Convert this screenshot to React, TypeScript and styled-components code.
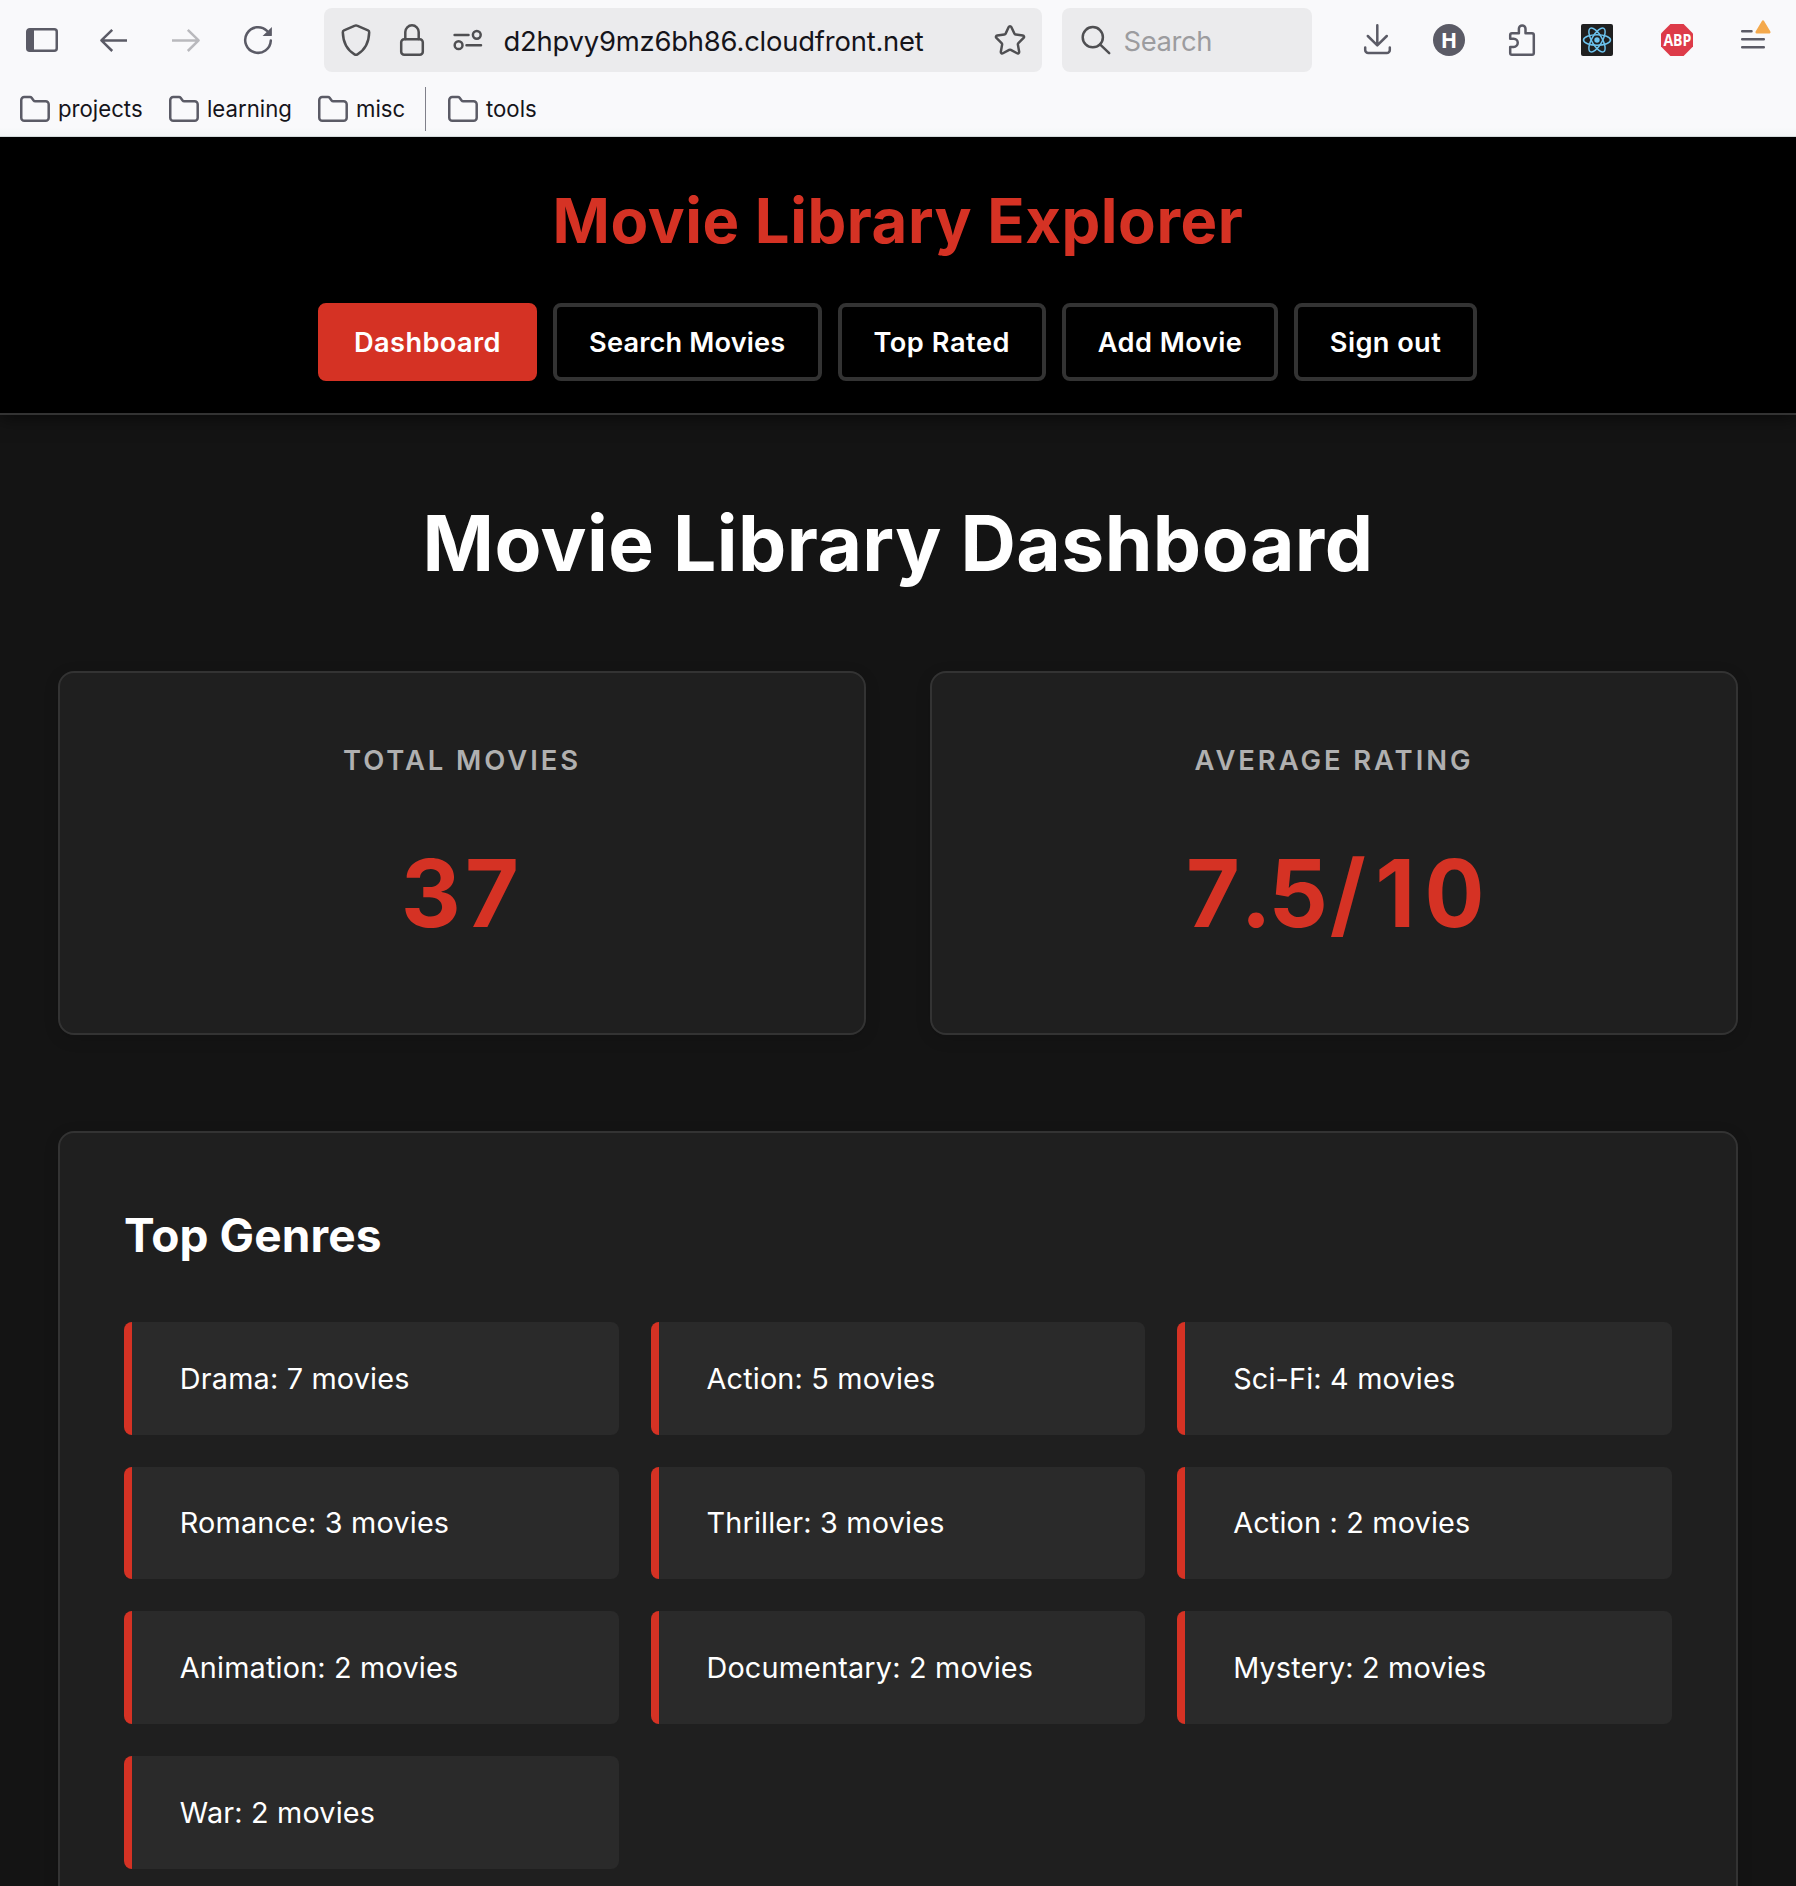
import React from 'react';
import styled, { createGlobalStyle } from 'styled-components';

const red = '#d53224';
const line = '#333333';
const chrome = '#5b5b66';
const field = '#4f4f52';

const GlobalStyle = createGlobalStyle`
  * { box-sizing: border-box; }
  html, body { margin: 0; padding: 0; background: #141414; }
  body {
    height: 1886px;
    overflow: hidden;
    font-family: Inter, "Liberation Sans", sans-serif;
    color: #ffffff;
  }
  h1, h2, h3, p, ul { margin: 0; padding: 0; }
`;

const Screen = styled.div`
  width: 1796px;
  height: 1886px;
  overflow: hidden;
  display: flex;
  flex-direction: column;
  background: #141414;
`;

/* Browser chrome */

const BrowserChrome = styled.div`
  position: relative;
  z-index: 1;
  flex: none;
  height: 137px;
  background: linear-gradient(#f9f9fb 0, #f9f9fb 127px, #f3f5f6 136px);
  border-bottom: 1px solid #d3dadb;
  color: #15141a;
`;

const Toolbar = styled.div`
  height: 80px;
  display: flex;
  align-items: center;
  padding-left: 26px;
`;

const NavButtons = styled.div`
  display: flex;
  gap: 40px;
  margin-right: 50px;
`;

const Glyph = styled.svg<{ $color?: string; $ml?: number; $stroke?: number }>`
  flex: none;
  display: block;
  width: 32px;
  height: 32px;
  overflow: visible;
  margin-left: ${(p) => p.$ml ?? 0}px;
  color: ${(p) => p.$color ?? chrome};
  fill: none;
  stroke: currentColor;
  stroke-width: ${(p) => p.$stroke ?? 2.5};
  stroke-linecap: round;
  stroke-linejoin: round;
`;

const Field = styled.div<{ $w: number; $pad: number }>`
  flex: none;
  width: ${(p) => p.$w}px;
  height: 64px;
  padding: 0 ${(p) => p.$pad}px;
  display: flex;
  align-items: center;
  border-radius: 8px;
  background: #ebebed;
`;

const SiteIcons = styled.div`
  display: flex;
  gap: 24px;
`;

const Address = styled.span`
  flex: 1;
  margin-left: 19.5px;
  font-size: 27.4px;
  line-height: 64px;
  letter-spacing: -0.2px;
  white-space: nowrap;
  padding-top: 2px;
`;

const SearchText = styled.span`
  margin-left: 11.5px;
  font-size: 27.4px;
  line-height: 64px;
  letter-spacing: -0.4px;
  color: #9c9c9f;
  padding-top: 2px;
`;

const SearchGap = styled.div`
  margin-left: 20px;
`;

const BadgeText = styled.text`
  font-family: "Open Sans", "Liberation Sans", sans-serif;
  font-weight: 700;
  fill: #ffffff;
  stroke: none;
`;

const Bookmarks = styled.div`
  height: 56px;
  padding-left: 20px;
  display: grid;
  grid-template-columns: 149px 149px 107px 23px auto;
  align-items: center;
`;

const Bookmark = styled.div`
  display: flex;
  align-items: center;
  font-size: 22.2px;
  line-height: 56px;
  letter-spacing: 0;
`;

const BookmarkName = styled.span`
  padding-top: 1px;
`;

const FolderSvg = styled.svg`
  flex: none;
  width: 30px;
  height: 28px;
  margin-right: 8px;
  fill: none;
  stroke: ${chrome};
  stroke-width: 2.5;
  stroke-linejoin: round;
`;

const Separator = styled.div`
  width: 1px;
  height: 44px;
  background: #80808a;
`;

/* Page */

const SiteHeader = styled.header`
  position: relative;
  flex: none;
  height: 278px;
  padding-top: 48px;
  background: #000000;
  border-bottom: 2px solid ${line};
  box-shadow: 0 4px 16px rgba(0, 0, 0, 0.5);
  text-align: center;
`;

const SiteTitle = styled.h1`
  font-size: 61.6px;
  line-height: 72px;
  font-weight: 700;
  letter-spacing: 0.55px;
  color: ${red};
  margin-bottom: 46px;
`;

const Nav = styled.nav`
  display: flex;
  justify-content: center;
  gap: 16px;
  padding-right: 1px;
`;

const NavButton = styled.button<{ $w: number; $active?: boolean; $ls: number }>`
  width: ${(p) => p.$w}px;
  height: 78px;
  padding: 0;
  border: 4px solid ${(p) => (p.$active ? red : line)};
  border-radius: 8px;
  background: ${(p) => (p.$active ? red : '#000000')};
  color: #ffffff;
  font-family: inherit;
  font-size: 27.2px;
  font-weight: 600;
  letter-spacing: ${(p) => p.$ls}px;
  white-space: nowrap;
`;

const Main = styled.main`
  padding: 64px 58px 0;
`;

const PageTitle = styled.h2`
  text-align: center;
  font-size: 76.7px;
  line-height: 128px;
  font-weight: 700;
  letter-spacing: 0.45px;
  margin-bottom: 64px;
`;

const Stats = styled.section`
  display: grid;
  grid-template-columns: 1fr 1fr;
  gap: 64px;
  margin-bottom: 96px;
`;

const Panel = styled.div`
  background: #1f1f1f;
  border: 2px solid ${line};
  border-radius: 16px;
  padding: 64px;
  box-shadow: 0 4px 16px rgba(0, 0, 0, 0.12);
`;

const StatPanel = styled(Panel)`
  height: 364px;
  text-align: center;
`;

const StatLabel = styled.h3`
  font-size: 27.4px;
  line-height: 46px;
  font-weight: 600;
  letter-spacing: 2.95px;
  color: #b0b0b0;
  margin-bottom: 32px;
`;

const StatValue = styled.p`
  font-size: 92.8px;
  line-height: 156px;
  font-weight: 750;
  font-kerning: none;
  font-variant-numeric: tabular-nums;
  letter-spacing: 0.6px;
  color: ${red};
`;

/* The tabular "1" has a foot serif, so the plain one is padded to a digit's width. */
const PlainOne = styled.span`
  font-variant-numeric: normal;
  margin: 0 8.5px 0 9px;
`;

const GenrePanel = styled(Panel)`
  height: 900px;
`;

const GenreTitle = styled.h3`
  font-size: 46px;
  line-height: 77px;
  font-weight: 700;
  letter-spacing: 0.1px;
  margin-bottom: 48px;
`;

const GenreList = styled.ul`
  list-style: none;
  display: grid;
  grid-template-columns: repeat(3, 1fr);
  grid-auto-rows: 112.67px;
  gap: 32px;
`;

const GenreItem = styled.li`
  display: flex;
  align-items: center;
  padding-left: 47.8px;
  border-left: 8px solid ${red};
  border-radius: 8px;
  background: #2a2a2a;
  font-size: 28.8px;
  letter-spacing: 0.18px;
  white-space: nowrap;
`;

const Folder = () => (
  <FolderSvg viewBox="0 0 30 28">
    <path d="M1.25 5 a3 3 0 0 1 3-3 H10 a2 2 0 0 1 1.6.8 L13.6 5.4 a2 2 0 0 0 1.6.8 H25.7 a3 3 0 0 1 3 3 V22.8 a3 3 0 0 1-3 3 H4.25 a3 3 0 0 1-3-3 Z" />
  </FolderSvg>
);

const navItems = [
  { label: 'Dashboard', w: 219, ls: 0.4, active: true },
  { label: 'Search Movies', w: 268.5, ls: 0.15 },
  { label: 'Top Rated', w: 208.5, ls: 0.55 },
  { label: 'Add Movie', w: 216, ls: 0.45 },
  { label: 'Sign out', w: 183, ls: 0.4 },
];

const genres = [
  'Drama: 7 movies',
  'Action: 5 movies',
  'Sci-Fi: 4 movies',
  'Romance: 3 movies',
  'Thriller: 3 movies',
  'Action : 2 movies',
  'Animation: 2 movies',
  'Documentary: 2 movies',
  'Mystery: 2 movies',
  'War: 2 movies',
];

const Browser = () => (
  <BrowserChrome>
    <Toolbar>
      <NavButtons>
        <Glyph viewBox="0 0 32 32">
          <rect x="1.25" y="5.25" width="29.5" height="21.5" rx="2.5" />
          <path d="M2 6h6v20H2z" fill="currentColor" stroke="none" />
        </Glyph>
        <Glyph viewBox="0 0 32 32">
          <path d="M3.4 16.4H29M14.2 5.8 3.4 16.4 14.2 27" strokeLinecap="butt" />
        </Glyph>
        <Glyph viewBox="0 0 32 32" $color="#b9b9bd">
          <path d="M28.6 16.4H2M17.8 5.8 28.6 16.4 17.8 27" strokeLinecap="butt" />
        </Glyph>
        <Glyph viewBox="0 0 32 32">
          <path d="M28.8 16.6A12.8 12.8 0 1 1 25 6.9" />
          <path d="M29.9 3v8.2a.9.9 0 0 1-.9.9h-8.4z" fill="currentColor" stroke="none" />
        </Glyph>
      </NavButtons>
      <Field $w={718} $pad={16}>
        <SiteIcons>
          <Glyph viewBox="0 0 32 32" $color={field}>
            <path d="M15 1.7a2.4 2.4 0 0 1 2 0L28 6.3a2 2 0 0 1 1.2 2c-.3 10-3.8 17.4-11.7 22a3 3 0 0 1-3 0C6.6 25.7 3.1 18.3 2.8 8.3a2 2 0 0 1 1.2-2z" />
          </Glyph>
          <Glyph viewBox="0 0 32 32" $color={field}>
            <rect x="5.2" y="15.2" width="21.6" height="15.6" rx="3" />
            <path d="M9.3 15V8a6.7 6.7 0 0 1 13.4 0v7" />
          </Glyph>
          <Glyph viewBox="0 0 32 32" $color={field}>
            <path d="M2.6 11H16.5M14.5 21.2H29" />
            <circle cx="24.8" cy="10.8" r="3.9" />
            <circle cx="6.6" cy="21.2" r="3.9" />
          </Glyph>
        </SiteIcons>
        <Address>d2hpvy9mz6bh86.cloudfront.net</Address>
        <Glyph viewBox="1 0.6 22 22" $color={field} $stroke={1.7}>
          <path d="M11.1 2.7a1 1 0 0 1 1.8 0l2.1 4.5a1.2 1.2 0 0 0 .9.66l4.9.65a1 1 0 0 1 .56 1.7l-3.6 3.5a1.2 1.2 0 0 0-.34 1.06l.88 4.9a1 1 0 0 1-1.45 1.05l-4.3-2.35a1.2 1.2 0 0 0-1.1 0l-4.3 2.35a1 1 0 0 1-1.45-1.05l.88-4.9a1.2 1.2 0 0 0-.34-1.06l-3.6-3.5a1 1 0 0 1 .56-1.7l4.9-.65a1.2 1.2 0 0 0 .9-.66z" />
        </Glyph>
      </Field>
      <SearchGap>
        <Field $w={250} $pad={18}>
          <Glyph viewBox="0 0 32 32" $color={field}>
            <circle cx="12.8" cy="13.2" r="10.1" />
            <path d="M20 20.4 29.2 29.2" />
          </Glyph>
          <SearchText>Search</SearchText>
        </Field>
      </SearchGap>
      <Glyph viewBox="0 0 32 32" $ml={48.5}>
        <path d="M16.3 1.2V21M6.8 12 16.3 21.4 25.8 12M4.2 23.5V26a3 3 0 0 0 3 3H25.8a3 3 0 0 0 3-3V23.5" />
      </Glyph>
      <Glyph viewBox="0 0 32 32" $ml={40.5}>
        <circle cx="16" cy="16" r="16" fill="currentColor" stroke="none" />
        <BadgeText x="16" y="23.6" fontSize="21.5" textAnchor="middle">H</BadgeText>
      </Glyph>
      <Glyph viewBox="0 0 32 32" $ml={40}>
        <path d="M5.2 14.8V11a1.8 1.8 0 0 1 1.8-1.8h6.9V4.7a3.3 3.3 0 0 1 6.6 0V9.2h6.5a1.8 1.8 0 0 1 1.8 1.8V28.9a1.8 1.8 0 0 1-1.8 1.8H7a1.8 1.8 0 0 1-1.8-1.8V22.9h3.5a4.05 4.05 0 0 0 0-8.1z" />
      </Glyph>
      <Glyph viewBox="0 0 32 32" $ml={44} $color="#6cc3ee" $stroke={1.5}>
        <rect width="32" height="32" rx="2" fill="#202020" stroke="none" />
        <circle cx="16" cy="16" r="2.7" fill="currentColor" stroke="none" />
        {[0, 60, 120].map((angle) => (
          <ellipse key={angle} cx="16" cy="16" rx="13.5" ry="5.2" transform={`rotate(${angle} 16 16)`} />
        ))}
      </Glyph>
      <Glyph viewBox="0 0 32 32" $ml={48}>
        <path d="M9.4 0H22.6L32 9.4V22.6L22.6 32H9.4L0 22.6V9.4z" fill="#dd3b49" stroke="none" />
        <BadgeText x="2.4" y="22" fontSize="16.5" textLength="28" lengthAdjust="spacingAndGlyphs">
          ABP
        </BadgeText>
      </Glyph>
      <Glyph viewBox="0 0 32 32" $ml={48}>
        <path d="M1.2 7.2H10.5M1.2 15.2H22.8M1.2 23.3H22.8" />
        <path d="M22 -2.4 28.3 8.2H15.7z" fill="#f4a94c" stroke="#f4a94c" />
      </Glyph>
    </Toolbar>
    <Bookmarks>
      <Bookmark><Folder /><BookmarkName>projects</BookmarkName></Bookmark>
      <Bookmark><Folder /><BookmarkName>learning</BookmarkName></Bookmark>
      <Bookmark><Folder /><BookmarkName>misc</BookmarkName></Bookmark>
      <Separator />
      <Bookmark><Folder /><BookmarkName>tools</BookmarkName></Bookmark>
    </Bookmarks>
  </BrowserChrome>
);

export default function App() {
  return (
    <Screen>
      <GlobalStyle />
      <Browser />
      <SiteHeader>
        <SiteTitle>Movie Library Explorer</SiteTitle>
        <Nav>
          {navItems.map((item) => (
            <NavButton key={item.label} $w={item.w} $ls={item.ls} $active={item.active}>
              {item.label}
            </NavButton>
          ))}
        </Nav>
      </SiteHeader>
      <Main>
        <PageTitle>Movie Library Dashboard</PageTitle>
        <Stats>
          <StatPanel>
            <StatLabel>TOTAL MOVIES</StatLabel>
            <StatValue>37</StatValue>
          </StatPanel>
          <StatPanel>
            <StatLabel>AVERAGE RATING</StatLabel>
            <StatValue>7.5/<PlainOne>1</PlainOne>0</StatValue>
          </StatPanel>
        </Stats>
        <GenrePanel>
          <GenreTitle>Top Genres</GenreTitle>
          <GenreList>
            {genres.map((genre) => (
              <GenreItem key={genre}>{genre}</GenreItem>
            ))}
          </GenreList>
        </GenrePanel>
      </Main>
    </Screen>
  );
}
